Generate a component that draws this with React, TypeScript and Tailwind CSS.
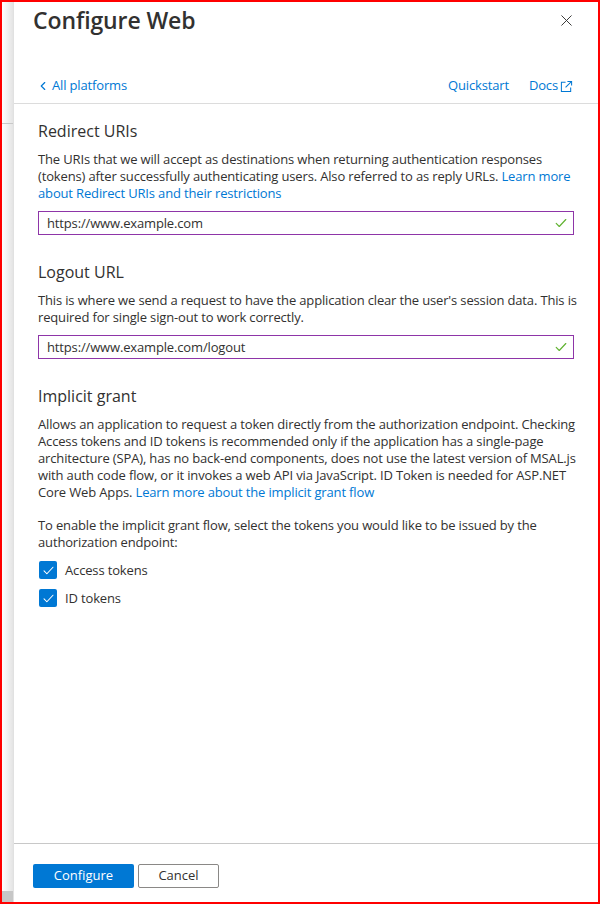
import { ChevronLeft, X } from "lucide-react";

const font = { fontFamily: '"Open Sans", "Noto Sans", Arial, sans-serif' };

function CheckMark({ className }: { className?: string }) {
  return (
    <svg viewBox="0 0 16 16" className={className} fill="none">
      <path d="M2.5 8.5l3.5 3.5 7.5-8" stroke="currentColor" strokeWidth="1.3" strokeLinecap="round" strokeLinejoin="round" />
    </svg>
  );
}

function ExternalIcon() {
  return (
    <svg viewBox="0 0 14 14" className="h-[13px] w-[13px]" fill="none" stroke="currentColor" strokeWidth="1.1">
      <path d="M6 2.5H1.5v10h10V8" />
      <path d="M8 1.5h4.5V6" />
      <path d="M12.5 1.5L6 8" />
    </svg>
  );
}

function UrlInput({ value }: { value: string }) {
  return (
    <div className="mt-[9px] flex h-[24px] items-center justify-between border border-[#8e35a8] pl-[8px] pr-[5px]">
      <span className="text-[13px] tracking-[-0.15px] text-[#323130]">{value}</span>
      <CheckMark className="h-[14px] w-[14px] text-[#5fb22f]" />
    </div>
  );
}

function Checkbox({ label }: { label: string }) {
  return (
    <label className="flex items-center gap-[8px]">
      <span className="ml-px flex h-[18px] w-[18px] items-center justify-center rounded-[2px] bg-[#0078d4]">
        <CheckMark className="h-[13px] w-[13px] text-white" />
      </span>
      <span className="text-[13px] tracking-[-0.15px] text-[#323130]">{label}</span>
    </label>
  );
}

export default function App() {
  return (
    <div style={font} className="flex h-[904px] w-[600px] border-2 border-[#ff0000] bg-white text-[#323130]">
      <div className="flex w-[11px] flex-col bg-gradient-to-r from-white to-[#e4e4e4]">
        <div className="h-[121px]" />
        <div className="h-px bg-[#c8c8c8]" />
        <div className="flex-1" />
        <div className="h-[11px] bg-[#c6c6c6]" />
      </div>

      <div className="flex min-w-0 flex-1 flex-col border-l border-[#e1e1e1] bg-white">
        <div className="flex items-start justify-between pl-[19px] pr-[22px] pt-[4px]">
          <h1 className="text-[23px] font-semibold leading-[28px] tracking-[-0.1px] text-[#323130]">Configure Web</h1>
          <X className="mt-[5px] h-[19px] w-[19px] text-[#323130]" strokeWidth={1.2} />
        </div>

        <div className="mt-[43px] flex h-[18px] items-center justify-between pl-[22px] pr-[25px] text-[13px] tracking-[-0.15px] text-[#0078d4]">
          <span className="flex items-center gap-[2px]">
            <ChevronLeft className="h-[14px] w-[14px]" strokeWidth={2} />
            All platforms
          </span>
          <span className="flex items-center gap-[20px]">
            <span>Quickstart</span>
            <span className="flex items-center gap-[2px]">
              Docs
              <ExternalIcon />
            </span>
          </span>
        </div>

        <div className="mt-[8px] h-px bg-[#dcdcdc]" />

        <div className="flex-1 px-[24px] pt-[16px] text-[13px] leading-[17px] tracking-[-0.15px]">
          <h2 className="text-[16px] leading-[22px] tracking-normal">Redirect URIs</h2>
          <p className="mt-[9px] whitespace-nowrap">
            The URIs that we will accept as destinations when returning authentication responses
            <br />
            (tokens) after successfully authenticating users. Also referred to as reply URLs.{" "}
            <span className="text-[#0078d4]">Learn more</span>
            <br />
            <span className="text-[#0078d4]">about Redirect URIs and their restrictions</span>
          </p>
          <UrlInput value="https://www.example.com" />

          <h2 className="mt-[26px] text-[16px] leading-[22px] tracking-normal">Logout URL</h2>
          <p className="mt-[9px] whitespace-nowrap">
            This is where we send a request to have the application clear the user's session data. This is
            <br />
            required for single sign-out to work correctly.
          </p>
          <UrlInput value="https://www.example.com/logout" />

          <h2 className="mt-[26px] text-[16px] leading-[22px] tracking-normal">Implicit grant</h2>
          <p className="mt-[9px] whitespace-nowrap">
            Allows an application to request a token directly from the authorization endpoint. Checking
            <br />
            Access tokens and ID tokens is recommended only if the application has a single-page
            <br />
            architecture (SPA), has no back-end components, does not use the latest version of MSAL.js
            <br />
            with auth code flow, or it invokes a web API via JavaScript. ID Token is needed for ASP.NET
            <br />
            Core Web Apps. <span className="text-[#0078d4]">Learn more about the implicit grant flow</span>
          </p>
          <p className="mt-[16px] whitespace-nowrap">
            To enable the implicit grant flow, select the tokens you would like to be issued by the
            <br />
            authorization endpoint:
          </p>
          <div className="mt-[10px] flex flex-col gap-[10px]">
            <Checkbox label="Access tokens" />
            <Checkbox label="ID tokens" />
          </div>
        </div>

        <div className="h-px bg-[#c8c8c8]" />
        <div className="flex gap-[4px] pb-[14px] pl-[19px] pt-[20px]">
          <button className="h-[24px] w-[101px] rounded-[2px] bg-[#0078d4] text-[13px] text-white">Configure</button>
          <button className="h-[24px] w-[81px] rounded-[2px] border border-[#8a8886] bg-white text-[13px] text-[#323130]">
            Cancel
          </button>
        </div>
      </div>
    </div>
  );
}
